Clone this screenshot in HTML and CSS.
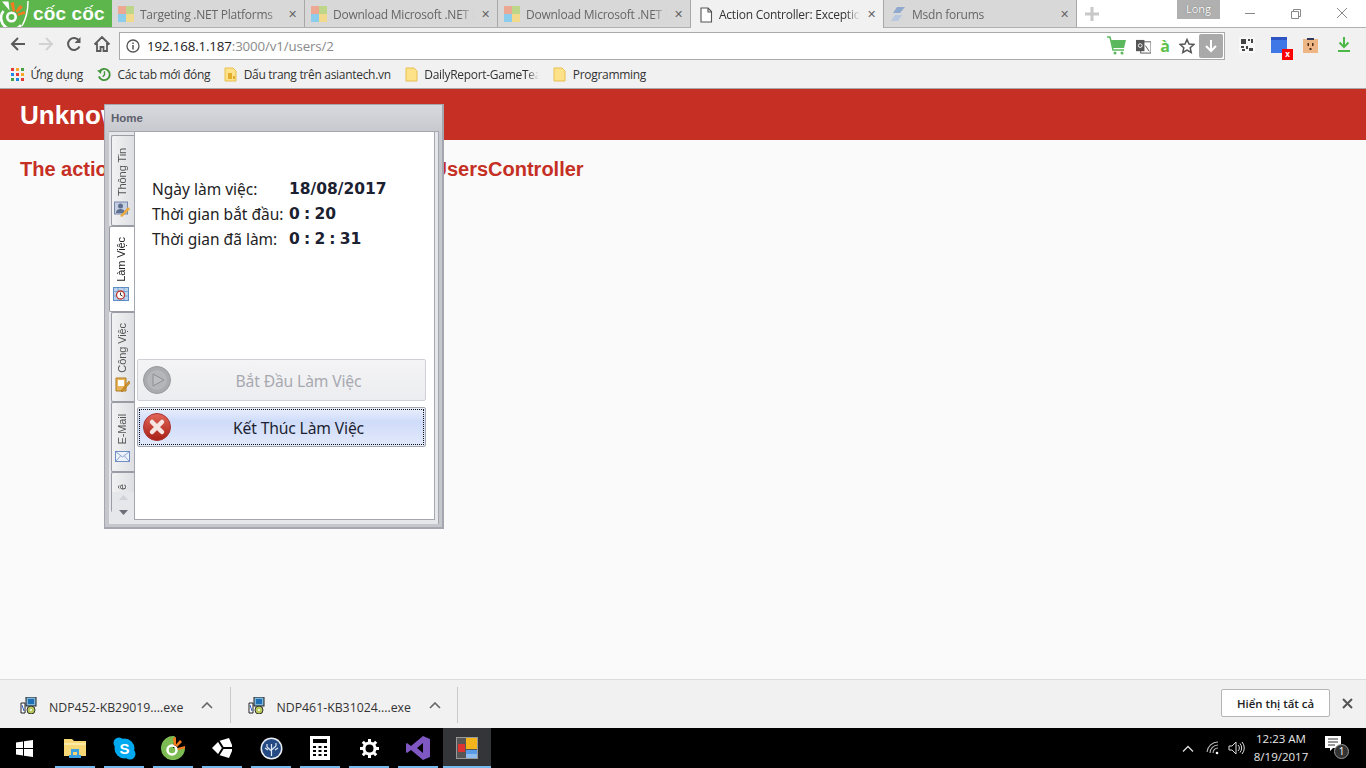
FILE: index.html
```html
<!DOCTYPE html>
<html lang="vi">
<head>
<meta charset="utf-8">
<title>Action Controller: Exception caught</title>
<link rel="stylesheet" href="styles.css">
</head>
<body>
<div class="chrome">
  <div class="tabstrip">
    <div class="brand">
      <svg class="brand-icon" width="31" height="27" viewBox="0 0 31 27"><path d="M3.500 11A10 10 0 1 0 21 25" fill="none" stroke="#fff" stroke-width="2.600"/><circle cx="11.500" cy="17" r="4.200" fill="none" stroke="#fff" stroke-width="2.600"/><path d="M10.500 3l3.500-1 1 9-2 1zM20 5l3 2-6 6-1.500-2zM24.500 11l1 2.500-7.500 2.500-.5-2.300z" fill="#f47b20"/><path d="M2 1.500l6.500 0 1 9z" fill="#fff"/><path d="M28 1c0 9-2 18-6 25" fill="none" stroke="#fff" stroke-width="1.500"/></svg>
      <span class="brand-name">cốc cốc</span>
    </div>
    <div class="tab">
      <svg class="fav" viewBox="0 0 16 16"><rect width="8" height="8" fill="#eda894"/><rect x="8" width="8" height="8" fill="#bed68a"/><rect y="8" width="8" height="8" fill="#8ccdee"/><rect x="8" y="8" width="8" height="8" fill="#f3d98c"/></svg>
      <span class="tab-title">Targeting .NET Platforms</span><span class="tab-x">✕</span>
    </div>
    <div class="tab">
      <svg class="fav" viewBox="0 0 16 16"><rect width="8" height="8" fill="#eda894"/><rect x="8" width="8" height="8" fill="#bed68a"/><rect y="8" width="8" height="8" fill="#8ccdee"/><rect x="8" y="8" width="8" height="8" fill="#f3d98c"/></svg>
      <span class="tab-title">Download Microsoft .NET Framework</span><span class="tab-x">✕</span>
    </div>
    <div class="tab">
      <svg class="fav" viewBox="0 0 16 16"><rect width="8" height="8" fill="#eda894"/><rect x="8" width="8" height="8" fill="#bed68a"/><rect y="8" width="8" height="8" fill="#8ccdee"/><rect x="8" y="8" width="8" height="8" fill="#f3d98c"/></svg>
      <span class="tab-title">Download Microsoft .NET Framework</span><span class="tab-x">✕</span>
    </div>
    <div class="tab tab-active">
      <svg class="fav" viewBox="0 0 16 16"><path d="M3 1h7l3.500 3.500V15H3zM10 1v4h3.500" fill="#fff" stroke="#555" stroke-width="1.100"/></svg>
      <span class="tab-title">Action Controller: Exception caught</span><span class="tab-x">✕</span>
    </div>
    <div class="tab">
      <svg class="fav" viewBox="0 0 16 16"><path d="M7 1h8l-5 6H3z" fill="#8fa9cf"/><path d="M1 15l4-6h7l-4 6z" fill="#b7c8e0"/></svg>
      <span class="tab-title">Msdn forums</span><span class="tab-x">✕</span>
    </div>
    <svg class="newtab" width="14" height="14" viewBox="0 0 14 14"><path d="M7 0v14M0 7h14" stroke="#c8c8c8" stroke-width="3"/></svg>
    <div class="spacer"></div>
    <div class="user-badge">Long</div>
    <div class="winctl">
      <svg width="46" height="28" viewBox="0 0 46 28"><path d="M18 13.500h10" stroke="#888"/></svg>
      <svg width="46" height="28" viewBox="0 0 46 28"><path d="M18.500 11.500h7v7h-7zM20.500 11.500v-2h7v7h-2" fill="none" stroke="#888"/></svg>
      <svg width="46" height="28" viewBox="0 0 46 28"><path d="M18 8l10 10M28 8L18 18" stroke="#888"/></svg>
    </div>
  </div>

  <div class="toolbar">
    <svg class="nav-icon" viewBox="0 0 18 18"><path d="M16 9H3M9 3L3 9l6 6" fill="none" stroke="#5a5a5a" stroke-width="2"/></svg>
    <svg class="nav-icon" viewBox="0 0 18 18"><path d="M2 9h13M9 3l6 6-6 6" fill="none" stroke="#d2d2d2" stroke-width="2"/></svg>
    <svg class="nav-icon" viewBox="0 0 18 18"><path d="M14.500 11.500A6 6 0 1 1 14 5.500" fill="none" stroke="#5a5a5a" stroke-width="2"/><path d="M15.500 2v6h-6z" fill="#5a5a5a"/></svg>
    <svg class="nav-icon" viewBox="0 0 18 18"><path d="M1.500 9.500L9 2l7.500 7.500M4 8v8h3.500v-4h3v4H14V8" fill="none" stroke="#5a5a5a" stroke-width="1.800"/></svg>
    <div class="omnibox">
      <svg class="info" width="14" height="14" viewBox="0 0 14 14"><circle cx="7" cy="7" r="6" fill="none" stroke="#555" stroke-width="1.300"/><path d="M7 6v4.500M7 3.500v1.500" stroke="#555" stroke-width="1.500"/></svg>
      <span class="url"><span class="url-host">192.168.1.187</span>:3000/v1/users/2</span>
      <div class="spacer"></div>
      <svg class="omni-icon" width="20" height="20" viewBox="0 0 20 20"><path d="M0 1h3l3 13h11" fill="none" stroke="#5cb85c" stroke-width="1.500"/><path d="M4 4h15l-2 8H6z" fill="#5cb85c"/><circle cx="8" cy="17" r="1.500" fill="#5cb85c"/><circle cx="15" cy="17" r="1.500" fill="#5cb85c"/></svg>
      <svg class="omni-icon" width="15" height="15" viewBox="0 0 16 16"><rect x="5" y="3" width="11" height="12" fill="#fff" stroke="#555"/><rect y="1" width="9" height="12" fill="#555"/><circle cx="4.500" cy="7" r="2" fill="none" stroke="#fff"/><path d="M10 7l4 6" stroke="#555"/></svg>
      <span class="omni-a">à</span>
      <svg class="omni-star" width="16" height="16" viewBox="0 0 16 16"><path d="M8 1.500l2 4.500 4.800.5-3.600 3.200 1 4.800L8 12l-4.200 2.500 1-4.800L1.200 6.500 6 6z" fill="none" stroke="#555" stroke-width="1.500"/></svg>
      <div class="omni-down"><svg width="14" height="14" viewBox="0 0 14 14"><path d="M7 1v11M2 7l5 5 5-5" fill="none" stroke="#fff" stroke-width="2"/></svg></div>
    </div>
    <div class="ext-group">
      <svg class="ext" width="16" height="16" viewBox="0 0 16 16"><rect width="16" height="16" fill="#f8f8f8"/><path d="M2 2h5v5H2zM9 2h2v2H9zM12 2h2v4h-2zM2 9h3v2H2zM7 9h2v3H7zM3 12h3v2H3zM10 11h4v3h-4z" fill="#444"/></svg>
      <div class="ext-wrap">
        <svg width="16" height="16" viewBox="0 0 16 16"><path d="M0 0h16v3H0z" fill="#2e55c4"/><path d="M0 3h16v13H0z" fill="#3f78e6"/></svg>
        <span class="ext-badge">x</span>
      </div>
      <svg class="ext" width="15" height="15" viewBox="0 0 15 15"><rect y="1" width="15" height="14" fill="#eeb585"/><rect x="4" width="7" height="2" fill="#33395a"/><path d="M4.500 5h1.500v3H4.500zM9 5h1.500v3H9zM6.500 10h2v2h-2z" fill="#4a2c1a"/></svg>
      <svg class="ext-dl" width="14" height="16" viewBox="0 0 14 16"><path d="M7 0v9M2.500 5.500L7 10l4.500-4.500M1 14h12" fill="none" stroke="#4db848" stroke-width="2"/></svg>
    </div>
  </div>

  <div class="bookmarks">
    <div class="bm">
      <svg class="bm-apps" width="13" height="13" viewBox="0 0 13 13"><path d="M0 0h3v3H0z" fill="#e53935"/><path d="M5 0h3v3H5z" fill="#f9a825"/><path d="M10 0h3v3h-3z" fill="#43a047"/><path d="M0 5h3v3H0z" fill="#1e88e5"/><path d="M5 5h3v3H5z" fill="#e53935"/><path d="M10 5h3v3h-3z" fill="#f9a825"/><path d="M0 10h3v3H0z" fill="#43a047"/><path d="M5 10h3v3H5z" fill="#1e88e5"/><path d="M10 10h3v3h-3z" fill="#e53935"/></svg>
      <span>Ứng dụng</span>
    </div>
    <div class="bm">
      <svg width="14" height="15" viewBox="0 0 15 15"><path d="M2.500 4.500A6 6 0 1 1 2 9.500" fill="none" stroke="#43953a" stroke-width="2"/><path d="M0 3l5 0-1 4z" fill="#43953a"/><path d="M8 4v4l-2 2" fill="none" stroke="#43953a" stroke-width="1.500"/></svg>
      <span>Các tab mới đóng</span>
    </div>
    <div class="bm">
      <svg class="folder" width="13" height="15" viewBox="0 0 13 15"><path d="M1 1h8l3 3v10H1z" fill="#fde28a" stroke="#e8bf4d"/><path d="M4 6h4v6H4z M9 9h2v3H9z" fill="#e2ad2c"/></svg>
      <span>Dấu trang trên asiantech.vn</span>
    </div>
    <div class="bm">
      <svg class="folder" width="13" height="15" viewBox="0 0 13 15"><path d="M1 1h8l3 3v10H1z" fill="#fde28a" stroke="#e8bf4d"/></svg>
      <span class="bm-clip">DailyReport-GameTeam</span>
    </div>
    <div class="bm">
      <svg class="folder" width="13" height="15" viewBox="0 0 13 15"><path d="M1 1h8l3 3v10H1z" fill="#fde28a" stroke="#e8bf4d"/></svg>
      <span>Programming</span>
    </div>
  </div>
</div>

<main class="page">
  <header class="err-head"><h1>Unknown action</h1></header>
  <h2 class="err-msg"><span class="err-covered">The action 'show' could not be found for </span>UsersController</h2>
</main>

<section class="app-window">
  <div class="app-title">Home</div>
  <div class="app-body">
    <nav class="side-tabs">
      <div class="side-tab st-info">
        <span>Thông Tin</span>
        <svg class="st-icon" width="16" height="16" viewBox="0 0 16 16"><rect x=".5" y="1" width="13" height="12" fill="#c5cfe4" stroke="#7a88a8"/><circle cx="6.500" cy="5" r="2.500" fill="#5f6f90"/><path d="M2 12c0-3 2-4 4.500-4s4.500 1 4.500 4z" fill="#5f6f90"/><path d="M6 15l8-9 2 2-8 8z" fill="#e8a93a"/></svg>
      </div>
      <div class="side-tab side-tab-active st-work">
        <span>Làm Việc</span>
        <svg class="st-icon" width="16" height="14" viewBox="0 0 16 14"><rect x=".5" y=".5" width="15" height="13" fill="#b9d3ee" stroke="#5e8cc4"/><path d="M0 4.500h16M0 9h16M5 0v14M11 0v14" stroke="#5e8cc4" stroke-width=".6"/><circle cx="7.500" cy="8" r="4" fill="#fff" stroke="#c0392b" stroke-width="1.300"/><path d="M7.500 5.500V8l2 1" fill="none" stroke="#333"/></svg>
      </div>
      <div class="side-tab st-job">
        <span>Công Việc</span>
        <svg class="st-icon" width="15" height="16" viewBox="0 0 15 16"><path d="M1 2h10v13H1z" fill="#e9b45a" stroke="#b07a20"/><path d="M3 4h6v6H3z" fill="#fff"/><path d="M6 15l8-10 1 2-8 9z" fill="#d99a2b" stroke="#8a5c10" stroke-width=".5"/></svg>
      </div>
      <div class="side-tab st-mail">
        <span>E-Mail</span>
        <svg class="st-icon" width="15" height="11" viewBox="0 0 15 11"><rect x=".5" y=".5" width="14" height="10" fill="#eef3fb" stroke="#6f8fc4"/><path d="M.5.500L7.500 6l7-5.500M.5 10.500L5.500 5M14.500 10.500L9.500 5" fill="none" stroke="#6f8fc4" stroke-width=".8"/></svg>
      </div>
      <div class="side-tab st-more"><span>ê</span></div>
      <div class="side-scroll">
        <svg width="9" height="5" viewBox="0 0 9 5"><path d="M0 5l4.500-5L9 5z" fill="#d0d2d8"/></svg>
        <svg width="9" height="5" viewBox="0 0 9 5"><path d="M0 0l4.500 5L9 0z" fill="#6d7078"/></svg>
      </div>
    </nav>
    <div class="panel">
      <dl class="info-grid">
        <dt>Ngày làm việc:</dt><dd>18/08/2017</dd>
        <dt>Thời gian bắt đầu:</dt><dd>0 : 20</dd>
        <dt>Thời gian đã làm:</dt><dd>0 : 2 : 31</dd>
      </dl>
      <div class="actions">
        <button class="act act-disabled" type="button">
          <svg class="act-icon" width="28" height="28" viewBox="0 0 28 28"><circle cx="14" cy="14" r="13.500" fill="#a9abaf" stroke="#98999d"/><circle cx="14" cy="14" r="10" fill="#b4b6ba"/><path d="M10 8l11 6-11 6z" fill="#bcbec2" stroke="#8d8f93"/></svg>
          <span>Bắt Đầu Làm Việc</span>
        </button>
        <button class="act act-focus" type="button">
          <svg class="act-icon" width="28" height="28" viewBox="0 0 28 28"><defs><linearGradient id="red" x1="0" y1="0" x2="0" y2="1"><stop offset="0" stop-color="#e2675a"/><stop offset="1" stop-color="#a81f14"/></linearGradient></defs><circle cx="14" cy="14" r="13.500" fill="url(#red)" stroke="#a33"/><path d="M9 9l10 10M19 9L9 19" stroke="#f5e6e4" stroke-width="4.500" stroke-linecap="round"/></svg>
          <span>Kết Thúc Làm Việc</span>
        </button>
      </div>
    </div>
  </div>
</section>

<div class="downloads">
  <div class="dl">
    <svg class="dl-icon" width="17" height="17" viewBox="0 0 17 17"><rect x="6" y="0" width="10" height="9" fill="#7fb5d9" stroke="#222"/><rect x="8" y="2" width="6" height="5" fill="#1f6fb5"/><path d="M1 6h4v10H1z" fill="#fff" stroke="#222"/><path d="M2 8l2 6" stroke="#2a5cc4"/><circle cx="11" cy="13" r="4" fill="#b7c95a" stroke="#333"/><circle cx="11" cy="13" r="1" fill="#fff"/></svg>
    <span class="dl-name">NDP452-KB29019....exe</span>
    <svg class="dl-caret" width="12" height="7" viewBox="0 0 12 7"><path d="M1 6l5-5 5 5" fill="none" stroke="#666" stroke-width="1.600"/></svg>
  </div>
  <div class="dl">
    <svg class="dl-icon" width="17" height="17" viewBox="0 0 17 17"><rect x="6" y="0" width="10" height="9" fill="#7fb5d9" stroke="#222"/><rect x="8" y="2" width="6" height="5" fill="#1f6fb5"/><path d="M1 6h4v10H1z" fill="#fff" stroke="#222"/><path d="M2 8l2 6" stroke="#2a5cc4"/><circle cx="11" cy="13" r="4" fill="#b7c95a" stroke="#333"/><circle cx="11" cy="13" r="1" fill="#fff"/></svg>
    <span class="dl-name">NDP461-KB31024....exe</span>
    <svg class="dl-caret" width="12" height="7" viewBox="0 0 12 7"><path d="M1 6l5-5 5 5" fill="none" stroke="#666" stroke-width="1.600"/></svg>
  </div>
  <div class="spacer"></div>
  <button class="show-all" type="button">Hiển thị tất cả</button>
  <svg class="dl-close" width="11" height="11" viewBox="0 0 11 11"><path d="M1 1l9 9M10 1l-9 9" stroke="#555" stroke-width="2"/></svg>
</div>

<footer class="taskbar">
  <div class="tb-start"><svg width="17" height="17" viewBox="0 0 17 17"><path d="M0 2.500l7-1v6.500H0zM8 1.300L17 0v8H8zM0 9h7v6.500l-7-1zM8 9h9v8l-9-1.300z" fill="#fff"/></svg></div>
  <div class="tb-item tb-on"><svg width="22" height="20" viewBox="0 0 22 20"><path d="M0 1h8l2 2h12v15H0z" fill="#f8d775"/><path d="M0 5h22v2H0z" fill="#fbe9a8"/><path d="M7 11h8v6h-2v-3H9v3H7z" fill="#3aa0e0"/><path d="M5 17h12v3H5z" fill="#3aa0e0"/></svg></div>
  <div class="tb-item tb-on"><svg width="23" height="23" viewBox="0 0 23 23"><circle cx="11.500" cy="11.500" r="10" fill="#00a9f0"/><circle cx="6" cy="6" r="5.500" fill="#00a9f0"/><circle cx="17" cy="17" r="5.500" fill="#00a9f0"/><text x="11.500" y="17" text-anchor="middle" class="sky-s">S</text></svg></div>
  <div class="tb-item tb-on"><svg width="24" height="24" viewBox="0 0 24 24"><path d="M14 .3A12 12 0 1 0 24 12L12 12z" fill="#7cbb53"/><circle cx="11" cy="14" r="4.500" fill="none" stroke="#fff" stroke-width="2.500"/><path d="M12 2l3-1 0 8-2 1zM19 4l2 2-5 5-1.500-2zM24 10v2.500l-7 1.500-.5-2z" fill="#f47b20"/></svg></div>
  <div class="tb-item tb-on"><svg width="22" height="22" viewBox="0 0 22 22"><path d="M1 11L8 4 18 1l3 7v6l-3 7-10-3z" fill="#fff"/><path d="M12 11h9M12 11L7 3M12 11L7 19" stroke="#000" stroke-width="2"/></svg></div>
  <div class="tb-item tb-on"><svg width="23" height="23" viewBox="0 0 23 23"><circle cx="11.500" cy="11.500" r="11" fill="#e8edf4"/><circle cx="11.500" cy="11.500" r="9.500" fill="#244a84"/><path d="M11.500 19V7M11.500 14L7 10M7 10V7M11.500 13L16 9M16 9V6M8 13L5 11M15 13l3-2" stroke="#dfe8f2" stroke-width="1.200" fill="none"/></svg></div>
  <div class="tb-item tb-on"><svg width="20" height="24" viewBox="0 0 20 24"><rect width="20" height="24" fill="#fff"/><path d="M3 3h14v4H3z" fill="#000"/><path d="M3 10h3v2H3zM8.500 10h3v2h-3zM14 10h3v2h-3zM3 14h3v2H3zM8.500 14h3v2h-3zM14 14h3v2h-3zM3 18h3v2H3zM8.500 18h3v2h-3zM14 18h3v2h-3z" fill="#000"/></svg></div>
  <div class="tb-item tb-on"><svg width="19" height="19" viewBox="0 0 19 19"><circle cx="9.500" cy="9.500" r="5.500" fill="none" stroke="#fff" stroke-width="3"/><path d="M9.500 0v4M9.500 15v4M0 9.500h4M15 9.500h4M2.800 2.800l2.800 2.800M13.400 13.400l2.800 2.800M16.200 2.800l-2.800 2.800M5.600 13.400l-2.800 2.800" stroke="#fff" stroke-width="3"/></svg></div>
  <div class="tb-item tb-on"><svg width="24" height="24" viewBox="0 0 24 24"><path d="M17 0l7 3v18l-7 3L5 14 1 17l-1-1V8l1-1 4 3zM17 7l-6 5 6 5z" fill="#7e57c2" fill-rule="evenodd"/></svg></div>
  <div class="tb-item tb-active"><svg width="22" height="22" viewBox="0 0 22 22"><rect x=".5" y=".5" width="21" height="21" fill="#555" stroke="#999"/><rect x="10" y="1" width="11" height="11" fill="#f2b31b"/><rect x="10" y="13" width="11" height="4" fill="#5a9be8"/><rect x="10" y="17" width="11" height="4" fill="#8fbdf0"/><rect x="2" y="7" width="7" height="8" fill="#d33"/></svg></div>
  <div class="spacer"></div>
  <div class="tray">
    <svg width="12" height="7" viewBox="0 0 12 7"><path d="M1 6.500l5-5 5 5" fill="none" stroke="#ddd" stroke-width="1.300"/></svg>
    <svg class="tray-wifi" width="14" height="14" viewBox="0 0 14 14"><path d="M1 11a11 11 0 0 1 11-10M4 12a8 8 0 0 1 8-8M7 12a5 5 0 0 1 5-5" fill="none" stroke="#bbb" stroke-width="1.100"/><circle cx="11" cy="12" r="1.300" fill="#fff"/></svg>
    <svg class="tray-vol" width="17" height="14" viewBox="0 0 17 14"><path d="M1 5h3l4-4v12l-4-4H1z" fill="none" stroke="#ddd"/><path d="M10 4a4 4 0 0 1 0 6M12 2.500a7 7 0 0 1 0 9M14 1a9 9 0 0 1 0 12" fill="none" stroke="#ddd"/></svg>
    <div class="clock"><span>12:23 AM</span><span>8/19/2017</span></div>
    <div class="notif">
      <svg width="16" height="15" viewBox="0 0 16 15"><path d="M0 0h16v12H8l-3 3v-3H0z" fill="#fff"/><path d="M3 3h10M3 6h10M3 9h7" stroke="#333"/></svg>
      <span class="notif-n">1</span>
    </div>
  </div>
</footer>
</body>
</html>
```
FILE: styles.css
```css
* { box-sizing: border-box; }
html, body { margin: 0; height: 100%; }
body {
  width: 1366px;
  height: 768px;
  overflow: hidden;
  display: flex;
  flex-direction: column;
  font-family: "Open Sans", "Noto Sans", "Liberation Sans", sans-serif;
  position: relative;
  background: #fafafa;
}
.spacer { flex: 1; }
svg { flex: none; display: block; }

/* browser frame */
.chrome { flex: none; background: #f1f1f1; }
.tabstrip {
  height: 28px;
  display: flex;
  align-items: stretch;
  background: #fff;
  border-bottom: 1px solid #b0b0b0;
}
.brand {
  width: 112px;
  height: 27px;
  background: #5cb64b;
  display: flex;
  align-items: center;
  gap: 2px;
}
.brand-name {
  color: #fff;
  font-family: "Liberation Sans", sans-serif;
  font-size: 19px;
  font-weight: 700;
  letter-spacing: .15px;
  white-space: nowrap;
}
.tab {
  width: 193px;
  height: 27px;
  display: flex;
  align-items: center;
  padding: 1px 4px 0 6px;
  background: #d8d8d8;
  border-right: 1px solid #a8a8a8;
  color: #666;
  font-size: 12px;
  letter-spacing: -.02em;
}
.tab-active { background: #f1f1f1; color: #333; height: 28px; position: relative; z-index: 1; padding-left: 7px; }
.fav { width: 16px; height: 16px; margin-right: 6px; }
.tab-active .fav { margin-right: 5px; }
.tab-title {
  flex: 1;
  overflow: hidden;
  white-space: nowrap;
  -webkit-mask-image: linear-gradient(to left, transparent 0, #000 14px);
  mask-image: linear-gradient(to left, transparent 0, #000 14px);
}
.tab-x { width: 12px; margin-left: 7px; font-size: 11px; font-weight: 700; color: #666; font-family: "DejaVu Sans", sans-serif; }
.newtab { align-self: center; margin-left: 8px; }
.user-badge {
  width: 43px;
  height: 19px;
  background: #b0b0b0;
  color: #fff;
  font-size: 11px;
  text-align: center;
  line-height: 17px;
  text-shadow: 0 0 1px #555;
}
.winctl { display: flex; margin-left: 7px; width: 139px; }

.toolbar {
  height: 32px;
  display: flex;
  align-items: center;
  padding-left: 9px;
}
.nav-icon { width: 18px; height: 18px; margin-right: 10px; }
.omnibox {
  width: 1106px;
  height: 28px;
  margin-left: -2px;
  margin-top: 4px;
  background: #fff;
  border: 1px solid #a9a9a9;
  display: flex;
  align-items: center;
  padding: 0 1px 0 6px;
}
.info { margin-right: 7px; }
.url { font-size: 13.300px; color: #8a8a8a; white-space: nowrap; letter-spacing: -.01em; }
.url-host { color: #222; }
.omni-icon { margin-right: 9px; }
.omni-star { margin-right: 4px; }
.omni-a { color: #5cc24a; font-size: 16px; font-weight: 700; margin-right: 9px; line-height: 1; }
.omni-down {
  width: 24px;
  height: 24px;
  background: #a9a9a9;
  border-radius: 2px;
  display: flex;
  align-items: center;
  justify-content: center;
}
.ext-group { display: flex; align-items: center; margin-left: 14px; gap: 14px; margin-top: 2px; }
.ext-wrap { position: relative; width: 16px; height: 16px; margin: 0 2px; }
.ext-dl { margin-left: 5px; }
.ext-badge {
  position: absolute;
  right: -6px;
  bottom: -7px;
  width: 11px;
  height: 11px;
  background: #f00;
  color: #fff;
  font-size: 8px;
  font-weight: 700;
  line-height: 10px;
  text-align: center;
}

.bookmarks {
  height: 29px;
  display: flex;
  align-items: center;
  padding-left: 11px;
  border-bottom: 1px solid #a8a8a8;
  font-size: 12px;
  color: #333;
  letter-spacing: -.025em;
}
.bm { display: flex; align-items: center; gap: 6.500px; margin-right: 14px; white-space: nowrap; }
.bm-clip {
  width: 115px;
  overflow: hidden;
  -webkit-mask-image: linear-gradient(to left, transparent 0, #000 12px);
  mask-image: linear-gradient(to left, transparent 0, #000 12px);
}

/* page under the floating window */
.page { flex: 1; min-height: 0; background: #fafafa; }
.err-head { height: 51px; background: #c52f24; padding: 2px 20px 0; display: flex; align-items: center; }
.err-head h1 {
  margin: 0;
  color: #fff;
  font-family: "Liberation Sans", sans-serif;
  font-size: 26px;
  font-weight: 700;
}
.err-msg {
  margin: 17px 20px 0;
  color: #c52f24;
  font-family: "Liberation Sans", sans-serif;
  font-size: 20px;
  font-weight: 700;
  line-height: 24px;
}
.err-covered { padding-right: 23px; }

/* floating window */
.app-window {
  position: absolute;
  left: 104px;
  top: 104px;
  width: 340px;
  height: 425px;
  background: linear-gradient(#d8d9de, #c6c7cd 30px);
  border: 1px solid #a5a7b0;
  display: flex;
  flex-direction: column;
  padding: 0 3px 3px 4px;
  border-bottom-width: 2px;
  border-right-width: 2px;
}
.app-title {
  height: 26px;
  padding: 7px 2px 0;
  font-family: "Liberation Sans", sans-serif;
  font-size: 11.500px;
  font-weight: 700;
  color: #5d5f6b;
}
.app-body {
  flex: 1;
  min-height: 0;
  display: flex;
  background: #e6e7ea;
  border-top: 1px solid #a5a7b0;
  border-right: 1px solid #a5a7b0;
  padding-right: 4px;
}
.side-tabs { width: 25px; flex: none; position: relative; overflow: hidden; padding: 3px 0 0 2px; }
.side-tab {
  width: 24px;
  display: flex;
  flex-direction: column;
  justify-content: flex-end;
  align-items: center;
  padding-right: 3px;
  background: linear-gradient(to right, #f2f2f4, #dddee2);
  border: 1px solid #9a9ca5;
  border-right: none;
  border-radius: 2px 0 0 2px;
  font-family: "Liberation Sans", sans-serif;
  font-size: 11px;
  letter-spacing: -.1px;
  color: #555;
}
.side-tab span { writing-mode: vertical-rl; transform: rotate(180deg); white-space: nowrap; }
.st-info { height: 91px; gap: 5px; padding-bottom: 8px; }
.st-work { height: 86px; gap: 5px; padding-bottom: 10px; }
.st-job { height: 90px; gap: 3px; padding-bottom: 9px; }
.st-mail { height: 70px; gap: 6px; padding-bottom: 9px; }
.st-more { height: 40px; justify-content: flex-start; padding-top: 11px; }
.side-tab-active {
  width: 26px;
  margin-left: -2px;
  background: #fff;
  color: #222;
  position: relative;
  z-index: 1;
}
.side-scroll {
  position: absolute;
  left: 3px;
  bottom: 0;
  width: 22px;
  height: 32px;
  background: #e6e7ea;
  display: flex;
  flex-direction: column;
  align-items: center;
  gap: 10px;
  padding-top: 3px;
}
.panel {
  flex: 1;
  background: #fff;
  border-left: 1px solid #a5a7b0;
  border-right: 1px solid #a5a7b0;
  border-bottom: 1px solid #a5a7b0;
  display: flex;
  flex-direction: column;
  padding: 44px 8px 0 2px;
  margin-bottom: 4px;
}
.info-grid {
  margin: 0 0 0 15px;
  display: grid;
  grid-template-columns: 137px auto;
  grid-auto-rows: 25px;
  align-items: center;
  color: #222;
}
.info-grid dt { font-family: "Noto Sans", sans-serif; font-size: 15.500px; white-space: nowrap; }
.info-grid dd { margin: 0; font-family: "DejaVu Sans", sans-serif; font-size: 15.500px; font-weight: 700; white-space: nowrap; color: #1b2130; word-spacing: -1.200px; }
.actions { display: flex; flex-direction: column; margin-top: 108px; gap: 6px; }
.act {
  position: relative;
  height: 42px;
  width: 289px;
  display: flex;
  align-items: center;
  padding: 2px 0 0 34px;
  border-radius: 2px;
  font-family: "Noto Sans", sans-serif;
  font-size: 15.700px;
  letter-spacing: -.01em;
  cursor: default;
}
.act span { flex: 1; text-align: center; }
.act-icon { position: absolute; left: 5px; top: 6px; }
.act-disabled { background: linear-gradient(#f4f4f6, #ecedf0); border: 1px solid #d0d1d6; color: #a8a9b0; }
.act-focus {
  height: 40px;
  background: linear-gradient(#e9effc, #cfdcf9 35%, #e2e9fb);
  border: 1px solid #a5a7b0;
  color: #1d1f33;
  outline: 1px dotted #111;
  outline-offset: -3px;
}
.act-focus .act-icon { top: 5px; }

/* downloads shelf */
.downloads {
  flex: none;
  height: 49px;
  background: #f1f1f1;
  border-top: 1px solid #dcdcdc;
  display: flex;
  align-items: center;
  padding-left: 3px;
}
.dl {
  width: 227.500px;
  height: 36px;
  margin-top: 2px;
  display: flex;
  align-items: center;
  padding-left: 17px;
  border-right: 1px solid #c8c8c8;
}
.dl-icon { margin-right: 12px; }
.dl-name { font-size: 12.300px; color: #333; white-space: nowrap; width: 152px; padding-top: 5px; }
.show-all {
  width: 109px;
  height: 28px;
  margin-bottom: 2px;
  background: #fff;
  border: 1px solid #b5b5b5;
  border-radius: 2px;
  font-family: "Open Sans", sans-serif;
  font-size: 11.400px;
  font-weight: 600;
  color: #222;
  margin-right: 12px;
}
.dl-close { margin-right: 13px; margin-bottom: 2px; }

/* taskbar */
.taskbar {
  flex: none;
  height: 40px;
  background: #000;
  display: flex;
  align-items: stretch;
}
.tb-start { width: 48px; display: flex; align-items: center; justify-content: center; margin-right: 3px; }
.tb-item {
  width: 48px;
  margin-right: 1px;
  display: flex;
  align-items: center;
  justify-content: center;
}
.tb-on { background: linear-gradient(#76b9ed, #76b9ed) center bottom / 40px 2px no-repeat; }
.tb-active { background: linear-gradient(#76b9ed, #76b9ed) center bottom / 100% 2px no-repeat, #333539; }
.sky-s { font-family: "Liberation Sans", sans-serif; font-size: 15px; font-weight: 700; fill: #fff; }
.tray { display: flex; align-items: center; color: #e8e8e8; padding-right: 17px; }
.tray-wifi { margin-left: 12px; }
.tray-vol { margin-left: 8px; }
.clock {
  display: flex;
  flex-direction: column;
  align-items: center;
  margin-left: 6px;
  width: 60px;
  font-size: 11.500px;
  line-height: 18px;
}
.notif { position: relative; margin-left: 14px; width: 24px; height: 24px; }
.notif-n {
  position: absolute;
  left: 9px;
  top: 8px;
  width: 15px;
  height: 15px;
  border-radius: 50%;
  background: #333;
  border: 1px solid #999;
  color: #fff;
  font-size: 10px;
  line-height: 13px;
  text-align: center;
}
```
